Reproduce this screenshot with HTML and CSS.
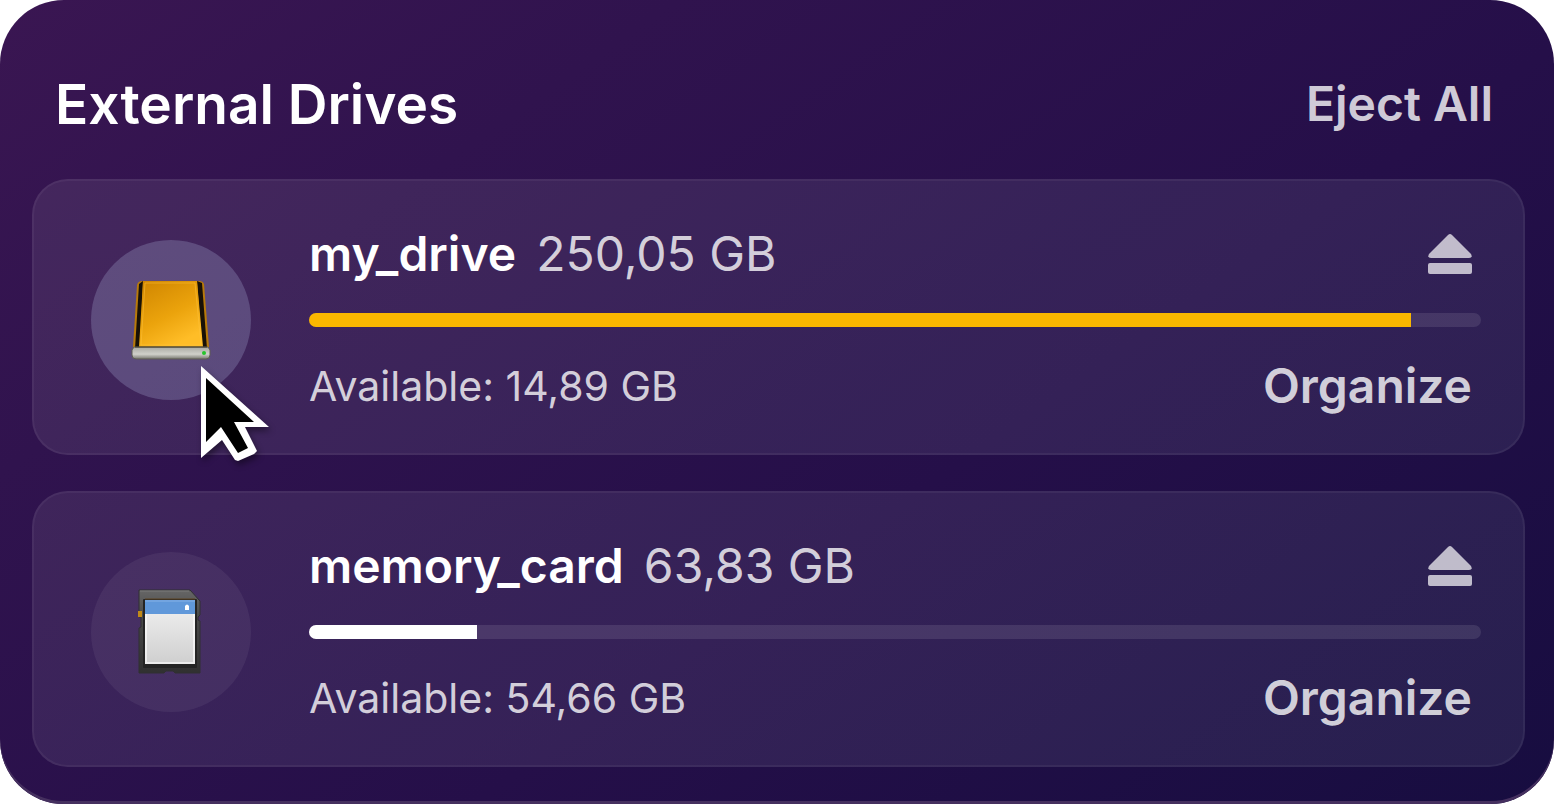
FILE: index.html
```html
<!DOCTYPE html>
<html lang="en">
<head>
    <meta charset="utf-8">
    <title>External Drives</title>
    <link rel="stylesheet" href="styles.css">
</head>
<body>
    <main class="panel">
        <header class="panel-header">
            <h1>External Drives</h1>
            <button type="button" class="text-button">Eject All</button>
        </header>

        <ul class="drive-list">
            <li class="drive">
                <div class="drive-icon active">
                    <svg width="80" height="82" viewBox="0 0 80 82" aria-hidden="true">
                        <defs>
                            <linearGradient id="gold" x1="0" y1="0" x2="0.5" y2="1">
                                <stop offset="0" stop-color="#cf8500"/>
                                <stop offset="0.6" stop-color="#eba30c"/>
                                <stop offset="1" stop-color="#ffbd27"/>
                            </linearGradient>
                            <linearGradient id="metal" x1="0" y1="0" x2="0" y2="1">
                                <stop offset="0" stop-color="#a9a9a2"/>
                                <stop offset="0.6" stop-color="#d0d0ca"/>
                                <stop offset="1" stop-color="#77776f"/>
                            </linearGradient>
                        </defs>
                        <path d="M11 2H68Q72 2 73 5L78 68V74H2V68L6 6Q7 2 11 2Z" fill="#b87a0a"/>
                        <path d="M8 5L12 2L9 68L4 70Z M66 2L71 4L76 70L71 69Z" fill="#181106"/>
                        <path d="M12 2H66L72 68H8Z" fill="url(#gold)"/>
                        <path d="M14 4H64L70 66H10Z" fill="none" stroke="#ffc43e" stroke-width="1" opacity="0.5"/>
                        <path d="M3 68H77L79 71V76Q79 80 75 80H5Q1 80 1 76V71Z" fill="url(#metal)" stroke="#5f5d55" stroke-width="1"/>
                        <path d="M4 68H76" stroke="#443c29" stroke-width="1"/>
                        <circle cx="73" cy="74" r="2" fill="#25c52b"/>
                    </svg>
                    <svg class="cursor" width="74" height="102" viewBox="0 0 74 102" aria-hidden="true">
                        <path d="M1 2L69 63H45L57 87L54 90L38 97L35 96L22 76L1 94Z" fill="#fff"/>
                        <path d="M6 14L54 58H34L48 84L38 89L21 63L6 78Z" fill="#000"/>
                    </svg>
                </div>
                <div class="drive-info">
                    <div class="drive-row">
                        <h2 id="drive-1">my_drive <span class="size">250,05 GB</span></h2>
                        <button type="button" class="eject-button" aria-label="Eject my_drive">
                            <svg width="44" height="40" viewBox="0 0 44 40" aria-hidden="true">
                                <path d="M20 1Q22 -1 24 1L43 20Q45 24 41 24H3Q-1 24 1 20Z"/>
                                <rect y="29" width="44" height="11" rx="2"/>
                            </svg>
                        </button>
                    </div>
                    <progress class="usage nearly-full" value="235.16" max="250.05" aria-labelledby="drive-1"></progress>
                    <div class="drive-row">
                        <p class="available">Available: 14,89 GB</p>
                        <button type="button" class="text-button">Organize</button>
                    </div>
                </div>
            </li>

            <li class="drive">
                <div class="drive-icon">
                    <svg width="66" height="86" viewBox="0 0 66 86" aria-hidden="true">
                        <defs>
                            <linearGradient id="card-body" x1="0" y1="0" x2="0" y2="1">
                                <stop offset="0" stop-color="#666"/>
                                <stop offset="0.3" stop-color="#4b4b4b"/>
                                <stop offset="1" stop-color="#303030"/>
                            </linearGradient>
                            <linearGradient id="card-label" x1="0" y1="0" x2="0" y2="1">
                                <stop offset="0" stop-color="#f2f2f2"/>
                                <stop offset="1" stop-color="#cfcfcf"/>
                            </linearGradient>
                        </defs>
                        <path d="M1 1H52L62 12V26L60 28V31L62 32V84H37L35 82H28L26 84H1V39L3 38V28H1Z" fill="url(#card-body)" stroke="#303033" stroke-width="1"/>
                        <path d="M2 2H51" stroke="#7b7b7b" stroke-width="1"/>
                        <rect y="22" width="4" height="6" fill="#c08a18"/>
                        <rect x="5" y="10" width="54" height="69" rx="1" fill="#242424"/>
                        <path d="M7 10H57" stroke="#5c4320" stroke-width="1"/>
                        <rect x="7" y="11" width="50" height="64" fill="url(#card-label)"/>
                        <rect x="7" y="11" width="50" height="14" fill="#6098da"/>
                        <path d="M7 12H57" stroke="#86b1e6" stroke-width="1"/>
                        <path d="M8 25V74H56V25" fill="none" stroke="#fff" stroke-width="2" opacity="0.6"/>
                        <path d="M47 17Q49 14 51 17V21H47Z" fill="#fff"/>
                    </svg>
                </div>
                <div class="drive-info">
                    <div class="drive-row">
                        <h2 id="drive-2">memory_card <span class="size">63,83 GB</span></h2>
                        <button type="button" class="eject-button" aria-label="Eject memory_card">
                            <svg width="44" height="40" viewBox="0 0 44 40" aria-hidden="true">
                                <path d="M20 1Q22 -1 24 1L43 20Q45 24 41 24H3Q-1 24 1 20Z"/>
                                <rect y="29" width="44" height="11" rx="2"/>
                            </svg>
                        </button>
                    </div>
                    <progress class="usage" value="9.17" max="63.83" aria-labelledby="drive-2"></progress>
                    <div class="drive-row">
                        <p class="available">Available: 54,66 GB</p>
                        <button type="button" class="text-button">Organize</button>
                    </div>
                </div>
            </li>
        </ul>
    </main>
</body>
</html>
```
FILE: styles.css
```css
* {
    box-sizing: border-box;
}
body {
    margin: 0;
    background: white;
    color: white;
    font-family: Inter, sans-serif;
}
h1, h2, p, ul {
    margin: 0;
    padding: 0;
}
button {
    padding: 0;
    border: none;
    background: none;
    font-family: inherit;
    cursor: pointer;
}
.panel {
    min-height: 100vh;
    padding: 72px 29px 36px 32px;
    border-radius: 64px;
    background: linear-gradient(145deg, #3a1652, #30134e 25%, #250f49 60%, #170d40);
    box-shadow: inset 0 -3px #45305f;
}
.panel-header {
    display: flex;
    justify-content: space-between;
    align-items: center;
    margin-bottom: 43px;
    padding: 0 32px 0 23px;
}
h1 {
    font-size: 55px;
    font-weight: 600;
    line-height: 64px;
}
.text-button {
    color: rgba(255, 255, 255, 0.8);
    font-size: 48px;
    font-weight: 600;
    line-height: 52px;
}
.drive-list {
    display: grid;
    gap: 36px;
    list-style: none;
}
.drive {
    display: flex;
    align-items: center;
    gap: 58px;
    padding: 47px 42px 41px 57px;
    border: 2px solid rgba(255, 255, 255, 0.05);
    border-radius: 36px;
    background: linear-gradient(145deg, rgba(255, 255, 255, 0.08), rgba(220, 255, 255, 0.08));
    background-origin: border-box;
}
.drive-icon {
    position: relative;
    display: flex;
    flex: none;
    justify-content: center;
    align-items: center;
    width: 160px;
    height: 160px;
    border-radius: 50%;
    background: rgba(255, 255, 255, 0.06);
}
.drive-icon.active {
    background: rgba(150, 150, 190, 0.34);
}
.cursor {
    position: absolute;
    top: 124px;
    left: 109px;
    filter: drop-shadow(2px 4px 3px rgba(0, 0, 0, 0.4));
}
.drive-info {
    flex: 1;
}
.drive-row {
    display: flex;
    justify-content: space-between;
    align-items: center;
    height: 52px;
    padding-right: 9px;
}
h2 {
    font-size: 48px;
    font-weight: 600;
    line-height: 52px;
}
.size {
    margin-left: 8px;
    color: rgba(255, 255, 255, 0.8);
    font-weight: 400;
}
.available {
    color: rgba(255, 255, 255, 0.8);
    font-size: 41px;
    line-height: 52px;
}
.eject-button {
    height: 40px;
    fill: rgba(255, 255, 255, 0.7);
}
.usage {
    display: block;
    width: 100%;
    height: 14px;
    margin: 33px 0;
    border: none;
    border-radius: 7px;
    background: none;
    overflow: hidden;
    appearance: none;
}
.usage::-webkit-progress-bar {
    background: rgba(255, 255, 255, 0.1);
}
.usage::-webkit-progress-value {
    background: white;
}
.usage.nearly-full::-webkit-progress-value {
    background: #fab700;
}
```
